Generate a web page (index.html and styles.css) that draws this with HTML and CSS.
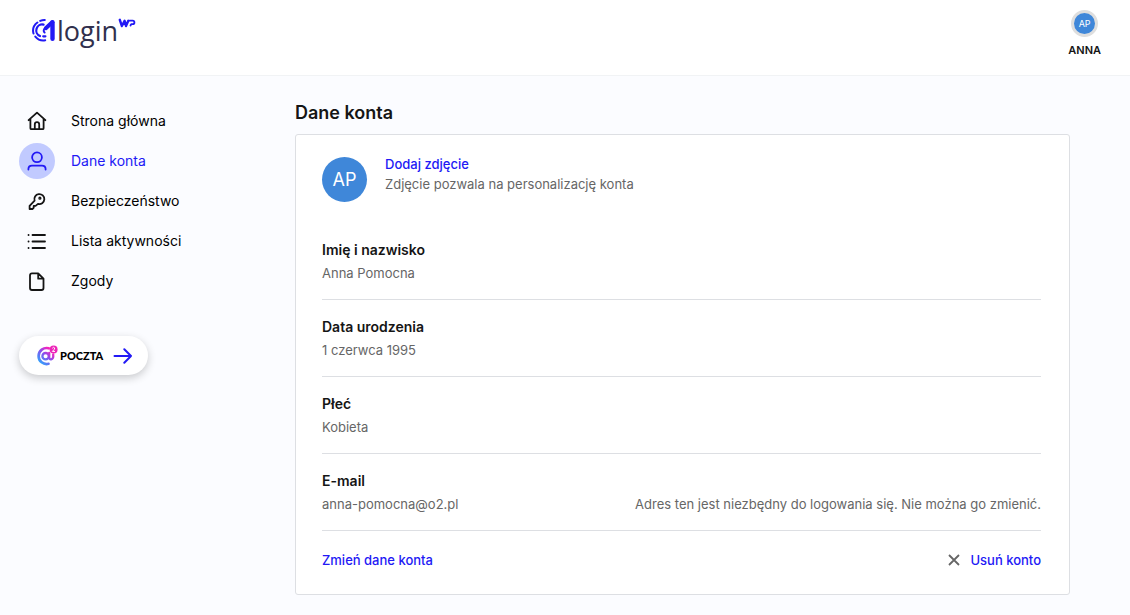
FILE: index.html
```html
<!DOCTYPE html>
<html lang="pl">
<head>
<meta charset="utf-8">
<meta name="viewport" content="width=device-width, initial-scale=1">
<title>Dane konta - 1login</title>
<link rel="stylesheet" href="styles.css">
</head>
<body>
<header class="topbar">
  <a class="logo" href="#" aria-label="1login od WP">
    <svg class="logo-mark" width="25" height="26" viewBox="0 0 25 26" fill="none" stroke="#2219f5" stroke-linecap="round">
      <path d="M13.800 2A10.400 10.400 0 0 0 9.200 2.900M6.400 4.500A10.400 10.400 0 0 0 2.500 15.600M4.300 18.600A10.400 10.400 0 0 0 14.200 22.300" stroke-width="2"/>
      <path d="M12.600 6.600A6 6 0 0 0 9 18M12.200 18.300H14.400" stroke-width="2.200"/>
      <path d="M14.800 10.200L21.200 4.300" stroke-width="4"/>
      <path d="M21.500 4.200V20.700" stroke-width="4.400"/>
      <path d="M14 10.300A2.600 2.600 0 0 0 13.600 14.500" stroke-width="2"/>
    </svg>
    <span class="logo-text">login</span>
    <svg class="logo-wp" width="19" height="11" viewBox="0 0 19 11" fill="none" stroke="#2219f5" stroke-linecap="round" stroke-linejoin="round">
      <path d="M1.800 1.800L3.900 8L6.600 2.800L8 8L10.300 2.800" stroke-width="2.400"/>
      <path d="M11.500 2.700H14.700A1.700 1.700 0 0 1 14.700 6.100H13.200L12.500 7.500" stroke-width="1.800"/>
    </svg>
  </a>
  <button class="profile" type="button">
    <span class="profile-avatar">AP</span>
    <span class="profile-name">ANNA</span>
  </button>
</header>
<div class="layout">
  <aside class="sidebar">
    <nav class="menu">
      <a class="menu-item" href="#">
        <span class="menu-icon"><svg width="20" height="20" viewBox="0 0 20 20"><path d="M1.600 9.200L10 1.700L18.400 9.200M3.400 8V17.200Q3.400 18.200 4.400 18.200H15.600Q16.600 18.200 16.600 17.200V8M7.800 18V13.400A2.200 2.200 0 0 1 12.200 13.400V18"/></svg></span>
        Strona główna
      </a>
      <a class="menu-item active" href="#" aria-current="page">
        <span class="menu-icon"><svg width="20" height="20" viewBox="0 0 20 20"><circle cx="10" cy="6.300" r="4.900"/><path d="M1.400 18.600V18Q1.400 14.600 5 14.600H15Q18.600 14.600 18.600 18V18.600"/></svg></span>
        Dane konta
      </a>
      <a class="menu-item" href="#">
        <span class="menu-icon"><svg width="20" height="20" viewBox="0 0 20 20"><path d="M7.600 9.700A5 5 0 1 1 11 12.900L8.600 14.900H6.700V16.800L5.400 18H2.600V14.800Z"/><circle cx="12.900" cy="7.200" r=".7"/></svg></span>
        Bezpieczeństwo
      </a>
      <a class="menu-item" href="#">
        <span class="menu-icon"><svg width="20" height="20" viewBox="0 0 20 20"><path d="M5.500 4H18M5.500 10.500H18M5.500 17H18M1.500 4H1.600M1.500 10.500H1.600M1.500 17H1.600"/></svg></span>
        Lista aktywności
      </a>
      <a class="menu-item" href="#">
        <span class="menu-icon"><svg width="20" height="20" viewBox="0 0 20 20"><path d="M11.200 2.400H5Q3 2.400 3 4.400V17Q3 19 5 19H14.500Q16.500 19 16.500 17V7.700ZM11.200 2.400V7.700H16.500"/></svg></span>
        Zgody
      </a>
    </nav>
    <a class="mail-link" href="#">
      <svg width="22" height="22" viewBox="0 0 22 22" fill="none" aria-hidden="true">
        <defs><linearGradient id="mail-gradient" x1="3" y1="20" x2="19" y2="3" gradientUnits="userSpaceOnUse"><stop offset="0" stop-color="#1eb5ff"/><stop offset=".5" stop-color="#8750ed"/><stop offset=".8" stop-color="#fb20bb"/></linearGradient></defs>
        <path d="M12.700 3.300A8 8 0 1 0 12.500 18.800" stroke="url(#mail-gradient)" stroke-width="2.700" stroke-linecap="round"/>
        <circle cx="9.600" cy="11.200" r="3.200" stroke="url(#mail-gradient)" stroke-width="2.300"/>
        <path d="M13.200 8V12.500Q13.400 14.500 15.100 14.300Q17.700 13.800 17.200 9.500" stroke="url(#mail-gradient)" stroke-width="2.300" stroke-linecap="round"/>
        <circle cx="17.600" cy="4.400" r="4" fill="#ed25b8"/>
        <path d="M16.300 3.300Q17.500 1.500 18.700 3Q19 4 16.400 6.400H19" stroke="#fff" stroke-width="1"/>
      </svg>
      <span class="mail-name">POCZTA</span>
      <svg class="mail-arrow" width="20" height="16" viewBox="0 0 20 16" fill="none" stroke="#2219f5" stroke-width="2" stroke-linecap="round" stroke-linejoin="round" aria-hidden="true"><path d="M1.500 8H18M11.300 1.300L18 8L11.300 14.700"/></svg>
    </a>
  </aside>
  <main class="content">
    <h1 class="title">Dane konta</h1>
    <section class="card">
      <div class="photo">
        <span class="avatar">AP</span>
        <div>
          <a class="link" href="#">Dodaj zdjęcie</a>
          <p class="text">Zdjęcie pozwala na personalizację konta</p>
        </div>
      </div>
      <dl class="details">
        <div class="row"><dt>Imię i nazwisko</dt><dd>Anna Pomocna</dd></div>
        <div class="row"><dt>Data urodzenia</dt><dd>1 czerwca 1995</dd></div>
        <div class="row"><dt>Płeć</dt><dd>Kobieta</dd></div>
        <div class="row"><dt>E-mail</dt><dd class="split"><span>anna-pomocna@o2.pl</span><span>Adres ten jest niezbędny do logowania się. Nie można go zmienić.</span></dd></div>
      </dl>
      <div class="actions">
        <a class="link" href="#">Zmień dane konta</a>
        <a class="link remove" href="#"><svg width="12" height="12" viewBox="0 0 12 12" stroke="#666" stroke-width="1.800" aria-hidden="true"><path d="M1 1L11 11M11 1L1 11"/></svg>Usuń konto</a>
      </div>
    </section>
  </main>
</div>
</body>
</html>
```
FILE: styles.css
```css
* {
  box-sizing: border-box;
}

body {
  margin: 0;
  min-height: 100vh;
  background: #fbfcff;
  color: #151515;
  font-family: Inter, "Noto Sans", sans-serif;
  font-size: 13px;
  line-height: 20px;
}

a {
  color: inherit;
  text-decoration: none;
}

.topbar {
  display: flex;
  justify-content: space-between;
  align-items: flex-start;
  height: 76px;
  padding: 10px 23px 0 31px;
  background: #fff;
  border-bottom: 1px solid #f1f3f5;
}

.logo {
  display: flex;
  align-items: flex-start;
  padding-top: 8px;
}

.logo-text {
  margin-left: 1px;
  color: #30304d;
  font-family: "Open Sans", sans-serif;
  font-size: 27px;
  font-weight: 400;
  line-height: 26px;
}

.profile {
  display: flex;
  flex-direction: column;
  align-items: center;
  gap: 3px;
  padding: 0 6px;
  border: 0;
  background: none;
  color: #151515;
  font: inherit;
}

.profile-avatar {
  width: 27px;
  height: 27px;
  border: 3px solid #dedede;
  border-radius: 50%;
  background: #3f87d9;
  color: #fff;
  font-size: 9px;
  line-height: 21px;
  text-align: center;
}

.profile-name {
  font-size: 11px;
  font-weight: 600;
}

.layout {
  display: grid;
  grid-template-columns: 276px minmax(0, 1fr);
  padding: 26px 60px 20px 19px;
}

.menu {
  display: flex;
  flex-direction: column;
  gap: 4px;
  padding-top: 1px;
}

.menu-item {
  display: flex;
  align-items: center;
  gap: 16px;
  color: #000;
  font-size: 14px;
}

.menu-icon {
  display: flex;
  align-items: center;
  justify-content: center;
  width: 36px;
  height: 36px;
  border-radius: 50%;
}

.menu-icon svg {
  fill: none;
  stroke: #151515;
  stroke-width: 1.8;
  stroke-linecap: round;
  stroke-linejoin: round;
}

.active {
  color: #2219f5;
}

.active .menu-icon {
  background: #c1caff;
}

.active .menu-icon svg {
  stroke: #2219f5;
}

.mail-link {
  display: inline-flex;
  align-items: center;
  height: 39px;
  margin-top: 37px;
  padding: 0 15px 0 17px;
  border-radius: 20px;
  background: #fff;
  box-shadow: 0 3px 8px rgba(0, 0, 0, .2);
}

.mail-name {
  margin-left: 2px;
  color: #000;
  font-family: Lato, sans-serif;
  font-size: 11px;
  font-weight: 900;
}

.mail-arrow {
  margin-left: 10px;
}

.title {
  margin: 0 0 10px;
  font-size: 18px;
  font-weight: 600;
  line-height: 22px;
}

.card {
  padding: 19px 28px 24px 26px;
  border: 1px solid #dddfe3;
  border-radius: 3px;
  background: #fff;
}

.photo {
  display: flex;
  align-items: flex-start;
  gap: 18px;
  margin-bottom: 21px;
}

.avatar {
  width: 45px;
  height: 45px;
  margin-top: 3px;
  border-radius: 50%;
  background: #3f87d9;
  color: #fff;
  font-size: 18px;
  line-height: 45px;
  text-align: center;
}

.link {
  color: #2219f5;
  font-weight: 500;
}

.text {
  margin: 0;
  color: #666;
}

.details {
  margin: 0;
}

.row {
  padding: 17px 0 16px;
  border-bottom: 1px solid #dddfe3;
}

.row dt {
  margin-bottom: 3px;
  font-size: 14px;
  font-weight: 600;
}

.row dd {
  margin: 0;
  color: #666;
}

.split,
.actions {
  display: flex;
  justify-content: space-between;
  gap: 16px;
}

.actions {
  padding-top: 19px;
}

.remove {
  display: inline-flex;
  align-items: center;
  gap: 10px;
}
```
